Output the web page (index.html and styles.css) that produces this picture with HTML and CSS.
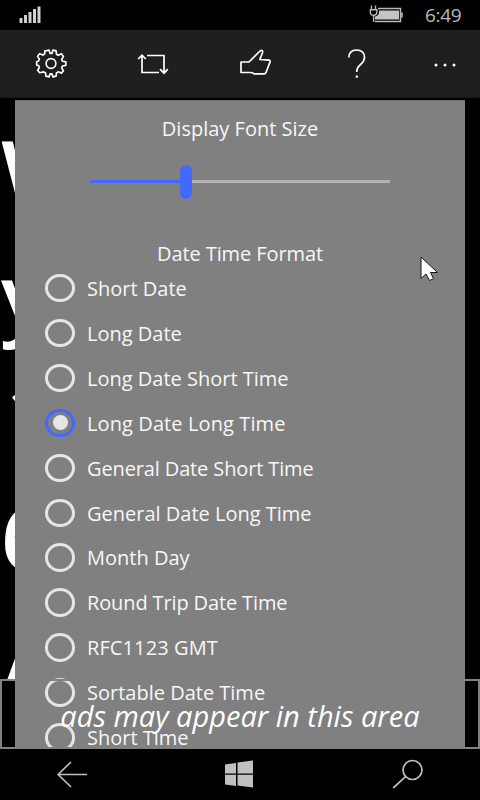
FILE: index.html
```html
<!DOCTYPE html>
<html lang="en">
<head>
<meta charset="utf-8">
<title>Settings</title>
<link rel="stylesheet" href="styles.css">
</head>
<body>
<div class="phone">
  <header class="status">
    <svg class="signal" width="24" height="18" viewBox="0 0 24 18" fill="#d0d0d0"><path d="M.5 13h3v5h-3zM5 10h3v8H5zM9.500 7h3v11h-3zM14 4h3v14h-3zM18.500 1.500h3V18h-3z"/></svg>
    <svg class="battery" width="36" height="20" viewBox="0 0 36 20" fill="none" stroke="#b8b8b8"><path d="M9 3.500h22.500v13H6" stroke-width="1.500"/><path d="M10 5.500h20v9H6v-3q4-1 4-4z" fill="#c4c4c4" stroke="none"/><path d="M33 7.500v5" stroke-width="1.600"/><path d="M2.500.5v4M6.500.5v4M1.300 4.800h6.600v2.500q0 3-3.300 3t-3.300-3zM4.600 10v7" stroke-width="1.400"/></svg>
    <span class="clock">6:49</span>
  </header>
  <nav class="commands">
    <svg class="gear" width="32" height="32" viewBox="-.5 0 33 32" fill="none" stroke="#fff" stroke-width="1.700" stroke-linejoin="round"><path d="M11.200 2.300 14 1.700 15 5h2l1-3.300 3.300.8.3 3.400 1.900 1.100 3.200-1.500 2.100 2.800-1.800 2.900.8 1.900 3.500.7v3.600l-3.500.7-.8 1.900 1.800 2.900-2.100 2.500-3.200-1.300-1.900 1.200-.3 3.200-3.300.8-1-3.100h-2l-1 3.100-3.300-.8-.3-3.200-1.900-1.200L4.300 25l-2.100-2.500L4 19.600l-.8-1.900-2-.7v-3.400l2-.7.8-1.900-1.800-2.900 2.100-2.800 3.200 1.500 1.900-1.100.3-3.300z"/><circle cx="16" cy="15.500" r="5"/></svg>
    <svg class="repeat" width="32" height="24" viewBox="0 0 32 24" fill="none" stroke="#fff" stroke-width="1.700"><path d="M10 3.500h17V21M5 3v17.500h17M1.200 7 5 3.200 8.800 7M23 17.200l4 4 3.800-4"/></svg>
    <svg class="thumb" width="32" height="30" viewBox="0 0 32 30" fill="none" stroke="#fff" stroke-width="1.700" stroke-linejoin="round"><path d="M1 14h8l10-10q2-2.500 3.200-1.300 1 1-.2 3.300l-2.200 5.500 9 .6q1.700.2 1.200 2L26 24.500q-.5 1.300-2 1.300H14q-2-1.500-4-1.300H1z"/></svg>
    <svg class="help" width="20" height="32" viewBox="0 0 20 32" fill="none" stroke="#fff" stroke-width="1.700"><path d="M1.800 9.500Q2.200 2 9.500 2q8 .1 8 7.500 0 3.500-3.800 6.800Q9.800 19.600 9.800 23v1"/><path d="M8.700 27.500h2.200v2.200H8.700z" fill="#fff" stroke="none"/></svg>
    <svg class="more" width="24" height="6" viewBox="0 0 24 6" fill="#fff"><circle cx="3" cy="3" r="1.500"/><circle cx="12" cy="3" r="1.500"/><circle cx="21" cy="3" r="1.500"/></svg>
  </nav>
  <main class="stage">
    <div class="display"><p>Wed</p><p class="year">y,</p><p class="day">1</p><p class="hour">6:</p><p class="half">AM</p></div>
    <div class="adfill"></div>
    <section class="panel">
      <h2 class="t1">Display Font Size</h2>
      <div class="slider"><span class="value"></span><span class="thumbbar"></span></div>
      <h2 class="t2">Date Time Format</h2>
      <ul class="options">
        <li><i></i><span>Short Date</span></li>
        <li><i></i><span>Long Date</span></li>
        <li><i></i><span>Long Date Short Time</span></li>
        <li class="on"><i></i><span class="wide">Long Date Long Time</span></li>
        <li><i></i><span class="tight">General Date Short Time</span></li>
        <li><i></i><span>General Date Long Time</span></li>
        <li><i></i><span>Month Day</span></li>
        <li><i></i><span class="tight">Round Trip Date Time</span></li>
        <li><i></i><span class="wide">RFC1123 GMT</span></li>
        <li><i></i><span>Sortable Date Time</span></li>
        <li><i></i><span>Short Time</span></li>
      </ul>
    </section>
    <div class="ad"><span>ads may appear in this area</span></div>
    <svg class="cursor" width="20" height="28" viewBox="0 0 20 28"><path d="M1 1v21.500l5-4.500 3.500 6.500 4-1.800-3-6.200h7z" fill="#fff" stroke="#15152a"/></svg>
  </main>
  <footer class="keys">
    <svg class="back" width="32" height="28" viewBox="0 0 32 28" fill="none" stroke="#bebebe" stroke-width="1.700"><path d="M31 14.500H2M15 2 2.200 14.500 15 27"/></svg>
    <svg class="start" width="30" height="28" viewBox="0 0 30 28" fill="#c0c0c0"><path d="M1 4.500l11-1.500v10.500H1zM13.500 2.500 29 .5v13H13.500zM1 14.800h11V26L1 24.500zM13.500 14.800H29V27.500l-15.500-2z"/></svg>
    <svg class="search" width="32" height="30" viewBox="0 0 32 30" fill="none" stroke="#bebebe" stroke-width="1.700"><circle cx="20.500" cy="11" r="9.500"/><path d="M13.500 17.700 1.200 29"/></svg>
  </footer>
</div>
</body>
</html>
```
FILE: styles.css
```css
* { box-sizing: border-box; margin: 0; padding: 0; }
body { background: #000; color: #fff; font-family: "Open Sans", "Noto Sans", sans-serif; }
svg { display: block; flex: none; }
.phone { width: 480px; height: 800px; display: flex; flex-direction: column; overflow: hidden; }
.status { height: 30px; display: flex; align-items: flex-start; padding: 5px 18px 0 19px; }
.battery { margin-left: auto; }
.clock { margin-left: 20px; width: 37px; font-size: 19px; line-height: 21px; color: #b9b9b9; letter-spacing: -.3px; white-space: nowrap; }
.commands { height: 68px; background: #1f1f1f; border-bottom: 1px solid #181818; display: flex; align-items: flex-start; padding: 18px 24px 0 35px; }
.repeat { margin: 4px 0 0 70px; }
.thumb { margin: 0 0 0 70.5px; }
.help { margin: 0 0 0 75px; }
.more { margin: 14px 0 0 66px; }
.stage { position: relative; height: 652px; overflow: hidden; }
.display { position: absolute; left: 1px; top: 13px; font-size: 94px; font-weight: 600; line-height: 124px; white-space: nowrap; }
.display p { height: 122px; }
.display .year { font-size: 88px; line-height: 124px; }
.display .day { padding-left: 4px; line-height: 117px; }
.display .hour { font-size: 88px; line-height: 118px; }
.adfill { position: absolute; left: 0; right: 0; top: 581px; height: 70px; background: #000; }
.panel { position: absolute; left: 15px; top: 2px; width: 450px; height: 648px; background: #808080; border-top: 1px solid #707070; overflow: hidden; }
h2 { font-size: 20px; font-weight: 400; line-height: 28px; text-align: center; color: #f7f7f7; }
.t1 { margin-top: 14px; width: 450px; }
.slider { position: relative; margin: 37px 0 0 75px; width: 300px; height: 3px; background: #b3b3b3; }
.value { display: block; width: 96px; height: 3px; background: #4169ff; }
.thumbbar { position: absolute; left: 90px; top: -15px; width: 12px; height: 34px; border-radius: 6px; background: #4169ff; }
.t2 { margin-top: 57px; letter-spacing: -.1px; }
.options { list-style: none; margin-top: -2.4px; }
.options li { height: 44.95px; display: flex; align-items: center; padding-left: 30px; font-size: 20px; color: #f7f7f7; }
.options i { width: 30px; height: 28.500px; border: 3px solid #e6e6e6; border-radius: 50%; margin-right: 12px; display: flex; align-items: center; justify-content: center; }
.options span { line-height: 28px; padding-top: 1.500px; white-space: nowrap; }
.options .wide { letter-spacing: .1px; }
.options .tight { letter-spacing: -.13px; }
.on i { border-color: #4169ff; }
.on i::after { content: ""; width: 15px; height: 15px; border-radius: 50%; background: #e6e6e6; }
.ad { position: absolute; left: 0; top: 581px; width: 480px; height: 70px; border: 2px solid #808080; text-align: center; font-size: 29px; font-style: italic; line-height: 70px; white-space: nowrap; }
.cursor { position: absolute; left: 420px; top: 158px; }
.keys { height: 50px; display: flex; align-items: flex-start; }
.back { margin: 10px 0 0 56px; }
.start { margin: 10px 0 0 136px; }
.search { margin: 9px 0 0 138px; }
```
